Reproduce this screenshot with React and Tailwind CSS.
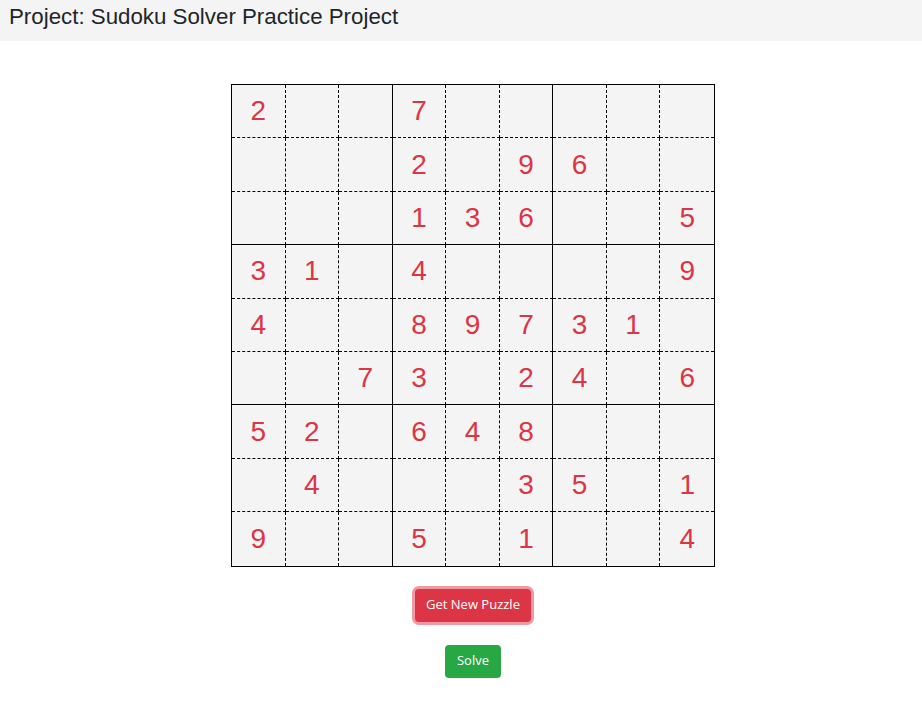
const puzzle = [
  [2, 0, 0, 7, 0, 0, 0, 0, 0],
  [0, 0, 0, 2, 0, 9, 6, 0, 0],
  [0, 0, 0, 1, 3, 6, 0, 0, 5],
  [3, 1, 0, 4, 0, 0, 0, 0, 9],
  [4, 0, 0, 8, 9, 7, 3, 1, 0],
  [0, 0, 7, 3, 0, 2, 4, 0, 6],
  [5, 2, 0, 6, 4, 8, 0, 0, 0],
  [0, 4, 0, 0, 0, 3, 5, 0, 1],
  [9, 0, 0, 5, 0, 1, 0, 0, 4],
];

function Cell({ value, row, col }) {
  // thick lines between 3x3 boxes, dashed everywhere else
  let right = "border-r border-r-black [border-right-style:dashed]";
  if (col === 8) right = "";
  else if (col === 2 || col === 5) right = "border-r border-r-black [border-right-style:solid]";

  let bottom = "border-b border-b-black [border-bottom-style:dashed]";
  if (row === 8) bottom = "";
  else if (row === 2 || row === 5) bottom = "border-b border-b-black [border-bottom-style:solid]";

  return (
    <div className={`${right} ${bottom} flex items-center justify-center h-[53.4px] text-[28px] text-[#dc3545]`}>
      {value !== 0 ? value : ""}
    </div>
  );
}

export default function App() {
  return (
    <div className="min-h-screen bg-white font-['Liberation_Sans',Arial,sans-serif]">
      <div className="h-[41px] bg-[#f4f4f4] px-[9px] pt-[4px] text-[22.3px] leading-[25px] text-[#212529]">
        Project: Sudoku Solver Practice Project
      </div>

      <div className="flex flex-col items-center pt-[43px] pl-[24px]">
        <div className="w-[484px] border border-black bg-[#f4f4f4] grid grid-cols-9">
          {puzzle.map((row, r) =>
            row.map((v, c) => <Cell key={`${r}-${c}`} value={v} row={r} col={c} />)
          )}
        </div>

        <button className="mt-[22px] h-[33px] px-[11px] rounded-[4px] bg-[#dc3545] text-white text-[13px] font-['Open_Sans',sans-serif] ring-[3px] ring-[#ef9aa2]">
          Get New Puzzle
        </button>

        <button className="mt-[23px] h-[33px] px-[12px] rounded-[4px] bg-[#28a745] text-white text-[13px] font-['Open_Sans',sans-serif]">
          Solve
        </button>
      </div>
    </div>
  );
}
